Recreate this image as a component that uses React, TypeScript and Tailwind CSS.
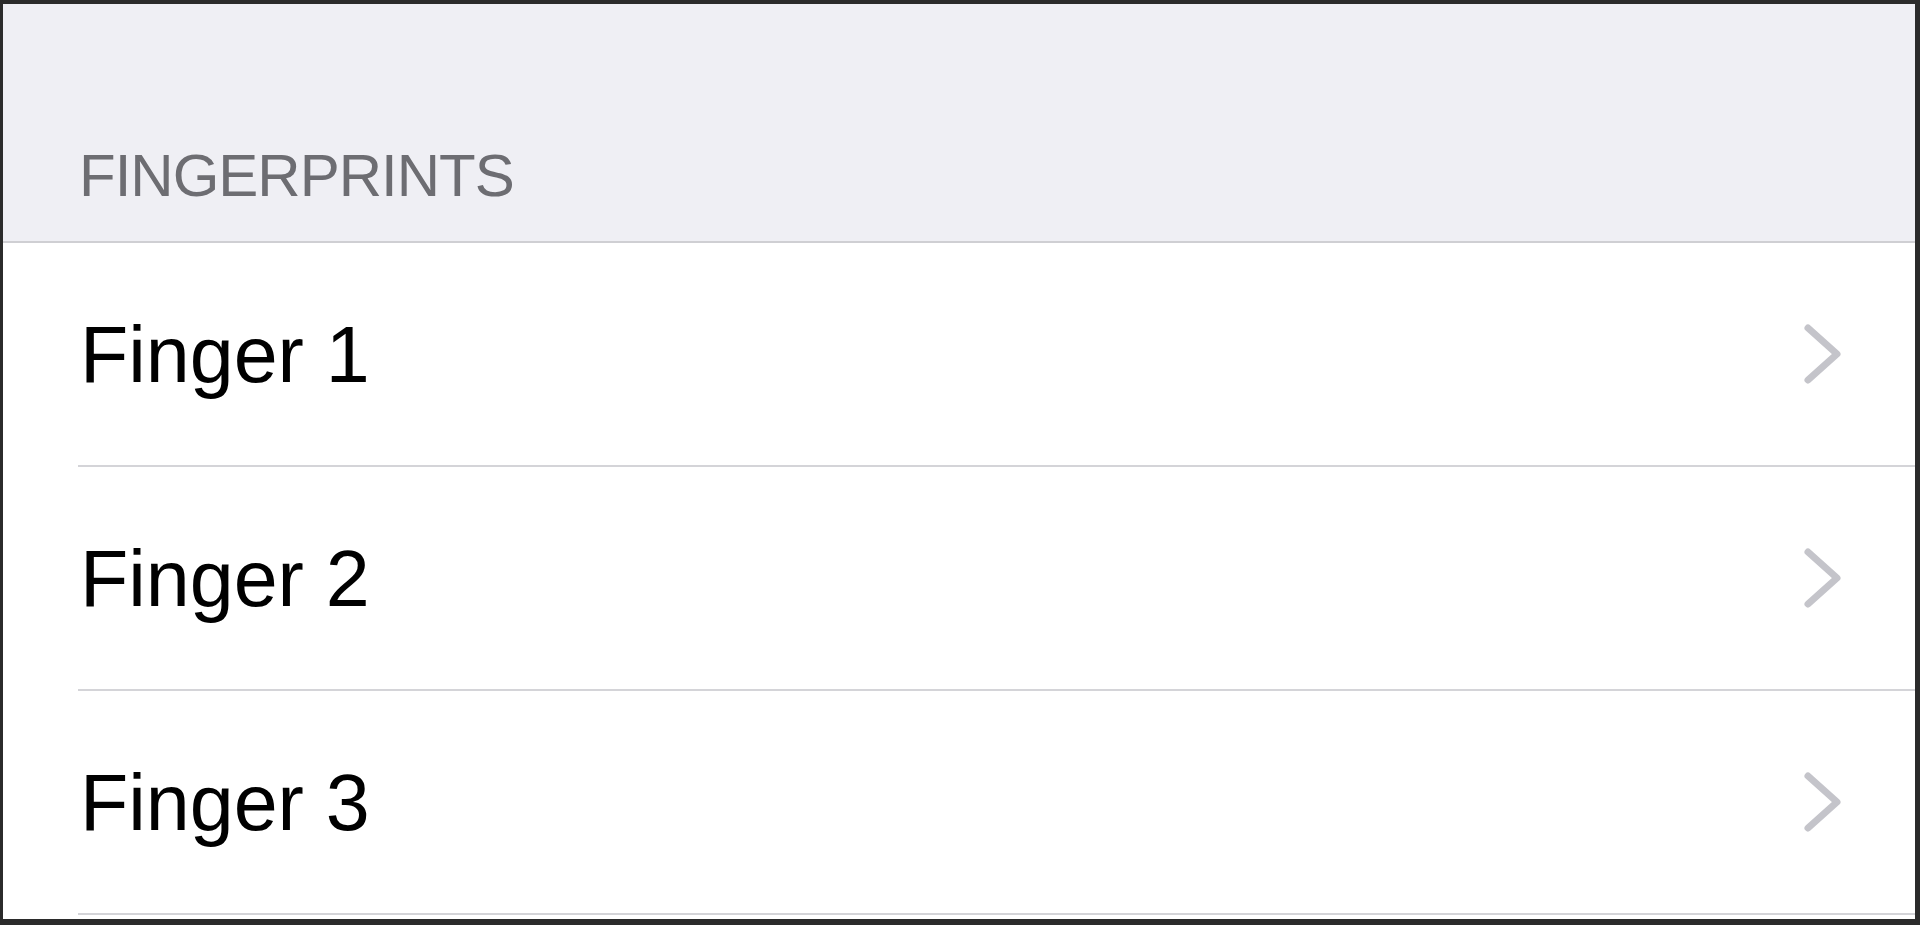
const fingers = ["Finger 1", "Finger 2", "Finger 3"];

function Chevron() {
  return (
    <svg width="44" height="64" viewBox="0 0 44 64" fill="none" className="shrink-0">
      <path
        d="M7 6 L36 32 L7 58"
        stroke="#c4c4ca"
        strokeWidth="7"
        strokeLinecap="round"
        strokeLinejoin="round"
      />
    </svg>
  );
}

export default function App() {
  return (
    <div className="w-[1920px] h-[925px] overflow-hidden bg-white border-t-4 border-l-[3px] border-r-[5px] border-b-[6px] border-[#2b2b2b] font-['Liberation_Sans',Arial,sans-serif]">
      {/* section header */}
      <div className="h-[239px] bg-[#efeff4] flex items-end pl-[76px] pb-[35px] border-b-2 border-[#cfcfd3]">
        <span className="text-[60px] leading-none tracking-[-1px] text-[#6d6d72]">FINGERPRINTS</span>
      </div>

      {/* rows */}
      <div className="flex flex-col">
        {fingers.map((f) => (
          <div key={f} className="pl-[75px]">
            <div className="h-[224px] flex items-center justify-between pl-[2px] pr-[70px] border-b-2 border-[#d4d4d8]">
              <span className="text-[79px] leading-none text-black">{f}</span>
              <Chevron />
            </div>
          </div>
        ))}
      </div>
    </div>
  );
}
